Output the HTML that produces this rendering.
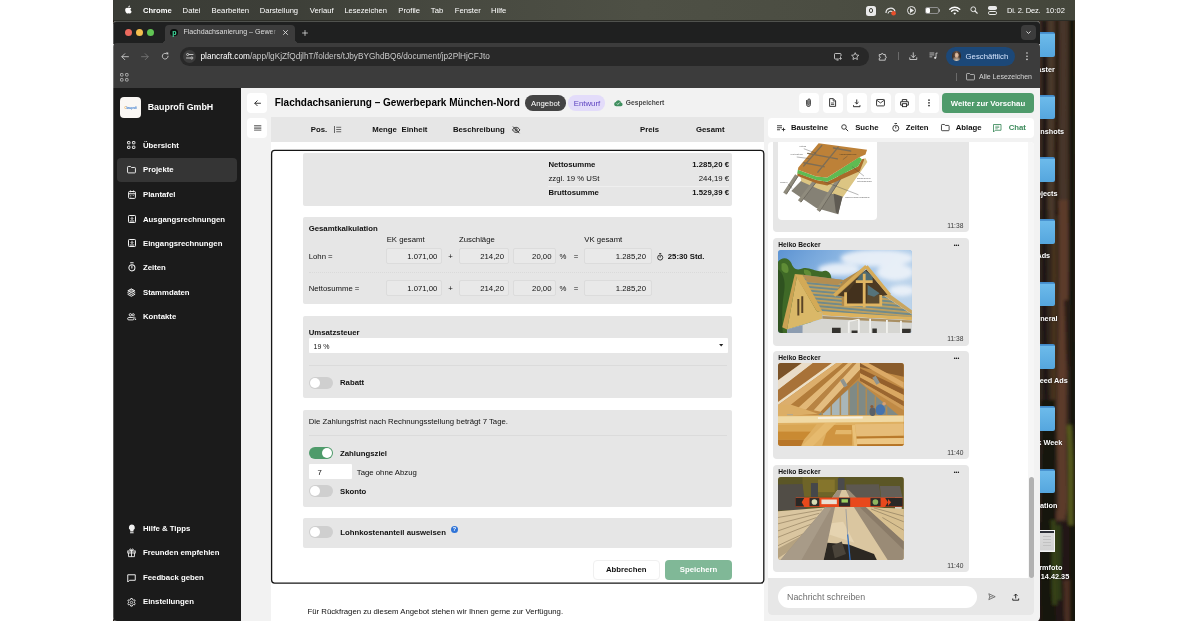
<!DOCTYPE html>
<html lang="de">
<head>
<meta charset="utf-8">
<title>Flachdachsanierung – Gewerbepark München-Nord</title>
<style>
*{box-sizing:border-box;margin:0;padding:0}
html,body{width:1188px;height:621px;overflow:hidden;background:#fff}
body{font-family:"Liberation Sans",sans-serif;color:#111;position:relative;font-size:7.78px;will-change:transform}
.a{position:absolute}
.t{position:absolute;white-space:nowrap;line-height:1;transform:translateY(-50%)}
.b{font-weight:700}
.r{transform:translate(-100%,-50%)}
.c{transform:translate(-50%,-50%)}
svg{position:absolute;overflow:visible}
.w{color:#fff}
.btn{position:absolute;background:#fff;border-radius:4px;width:20px;height:20px}
.sec{position:absolute;left:303px;width:429px;background:#e6e6e6;border-radius:2px}
.inp{position:absolute;background:#e9e9e9;border:1px solid #dcdcdc;border-radius:2px;height:16.4px}
.tog{position:absolute;left:309px;width:24px;height:12px;border-radius:6px;background:#cfcfcf}
.tog i{position:absolute;left:1px;top:1px;width:10px;height:10px;border-radius:5px;background:#fff}
.tog.on{background:#4f9b6b}.tog.on i{left:13px}
.hl{position:absolute;left:308.7px;width:418px;height:0;border-top:0.6px solid #dbdbdb}
.bub{position:absolute;left:773px;width:195.5px;background:#e6e6e6;border-radius:4px}
.sm{font-size:6.67px}
.fold{position:absolute;left:0;width:14.800px;height:24.800px;border-radius:0 2px 2px 0;background:linear-gradient(#3f88c6 0,#4a93d0 1.500px,#6cbaea 2.500px,#55a6de 100%)}
.dl{color:#fff;font-weight:700;font-size:7.3px;text-shadow:0 0 1.5px rgba(0,0,0,0.6)}
</style>
</head>
<body>
<div class="a" style="left:113px;top:0;width:962px;height:621px;background:#2a2019"></div>
<svg style="left:1036px;top:18px" width="39" height="603" viewBox="1036 18 39 603"><defs><filter id="bl" x="-20%" y="-5%" width="140%" height="110%"><feGaussianBlur stdDeviation="1.600"/></filter><clipPath id="dc"><rect x="1036" y="18" width="39" height="603"/></clipPath></defs>
<g clip-path="url(#dc)"><g filter="url(#bl)">
<rect x="1030" y="10" width="50" height="620" fill="#33261d"/>
<rect x="1030" y="10" width="50" height="200" fill="#3f2f24"/>
<path d="M1044,20C1046,120 1042,260 1046,400S1044,560 1046,625" stroke="#1f1712" stroke-width="5" fill="none"/>
<path d="M1057,20C1058,90 1055,150 1057,215" stroke="#21180f" stroke-width="3" fill="none"/>
<path d="M1051,20C1052,100 1050,160 1052,230" stroke="#4a382a" stroke-width="5" fill="none"/>
<path d="M1063,20C1064,100 1062,160 1064,230" stroke="#46352a" stroke-width="6" fill="none"/>
<path d="M1063,200C1066,300 1060,380 1062,460S1060,500 1061,520" stroke="#5b3a29" stroke-width="9" fill="none"/>
<rect x="1036" y="522" width="44" height="105" fill="#1c1611" opacity="0.800"/>
<path d="M1067,580C1069,595 1067,610 1069,625" stroke="#4a2e20" stroke-width="8" fill="none"/>
<path d="M1058,525C1060,550 1056,570 1059,600" stroke="#2f3a15" stroke-width="6" fill="none"/>
<path d="M1054,230C1056,300 1052,380 1054,420" stroke="#46301f" stroke-width="5" fill="none"/>
<path d="M1072,18C1073,200 1071,400 1073,625" stroke="#19140f" stroke-width="6" fill="none"/>
<path d="M1048,400C1050,470 1046,560 1049,625" stroke="#17130e" stroke-width="14" fill="none"/>
<path d="M1069,425C1072,460 1070,500 1071,525" stroke="#55591f" stroke-width="5" fill="none"/>
<path d="M1053,520C1056,550 1052,580 1055,605" stroke="#343f17" stroke-width="5" fill="none"/>
<path d="M1066,300C1068,330 1067,350 1069,370" stroke="#2a1c14" stroke-width="4" fill="none"/>
</g></g></svg>
<div class="a" style="left:113px;top:0;width:962px;height:20px;border-bottom:1px solid #2c2d27;box-sizing:content-box;background:linear-gradient(90deg,#3a3c36 0,#3d3f38 18%,#474940 35%,#4e5045 55%,#4b4d42 75%,#44463b 100%)"></div>
<span class="t b w" style="left:143px;top:10.5px;font-size:7.6px">Chrome</span>
<span class="t w" style="left:182.6px;top:10.5px;font-size:7.7px">Datei</span>
<span class="t w" style="left:211.600px;top:10.500px;font-size:7.750px">Bearbeiten</span>
<span class="t w" style="left:259.700px;top:10.500px;font-size:7.600px">Darstellung</span>
<span class="t w" style="left:309.800px;top:10.500px;font-size:7.700px">Verlauf</span>
<span class="t w" style="left:344.4px;top:10.5px;font-size:7.57px">Lesezeichen</span>
<span class="t w" style="left:398.3px;top:10.5px;font-size:7.7px">Profile</span>
<span class="t w" style="left:430.8px;top:10.5px;font-size:7.7px">Tab</span>
<span class="t w" style="left:454.700px;top:10.500px;font-size:7.700px">Fenster</span>
<span class="t w" style="left:491px;top:10.500px;font-size:7.700px">Hilfe</span>
<span class="t w" style="left:1006.900px;top:11px;font-size:7.500px;letter-spacing:-0.120px">Di. 2. Dez.</span>
<span class="t w" style="left:1045.700px;top:11px;font-size:7.500px;letter-spacing:0.120px">10:02</span>
<!-- apple -->
<svg style="left:124px;top:4.800px" width="8" height="9.200" viewBox="0 0 18 20"><path fill="#fff" d="M14.6 10.6c0-2.2 1.8-3.2 1.9-3.3-1-1.5-2.6-1.7-3.200-1.700-1.400-.1-2.700.8-3.300.8-.7 0-1.700-.8-2.900-.8C5.600 5.600 4.200 6.500 3.400 7.800c-1.600 2.700-.4 6.800 1.100 9 .8 1.100 1.700 2.300 2.900 2.200 1.100 0 1.600-.7 3-.7s1.800.7 3 .7c1.200 0 2-1.100 2.800-2.200.9-1.300 1.200-2.500 1.200-2.500s-2.400-.9-2.400-3.600zM12.300 4c.6-.8 1.100-1.900.9-3-.9 0-2 .6-2.700 1.400-.6.700-1.100 1.800-1 2.900 1.100.1 2.100-.5 2.800-1.300z"/></svg>
<!-- status icons -->
<div class="a" style="left:866px;top:5.5px;width:10px;height:10px;border-radius:2.5px;background:#e9e9e9"></div>
<div class="a" style="left:868.6px;top:8.1px;width:4.8px;height:4.8px;border-radius:50%;border:1px solid #3e4038"></div>
<svg style="left:885px;top:5.5px" width="12" height="10" viewBox="0 0 12 10"><path d="M1 7a4.600 4.600 0 0 1 9-1.500" stroke="#e9e9e9" stroke-width="1.200" fill="none"/><path d="M3 7.500a2.700 2.700 0 0 1 5-1" stroke="#e9e9e9" stroke-width="1.100" fill="none"/><circle cx="8.600" cy="7.300" r="2.300" fill="#e8502c"/></svg>
<div class="a" style="left:906.6px;top:6px;width:9px;height:9px;border-radius:50%;border:1px solid #e9e9e9"></div>
<svg style="left:909.8px;top:8.3px" width="4" height="5" viewBox="0 0 4 5"><path d="M0 0L4 2.500L0 5z" fill="#e9e9e9"/></svg>
<div class="a" style="left:925px;top:7px;width:13.500px;height:7px;border-radius:2px;border:0.8px solid #8f8f8f"></div>
<div class="a" style="left:926.3px;top:8.3px;width:3.500px;height:4.400px;border-radius:1px;background:#fff"></div>
<div class="a" style="left:939px;top:9.200px;width:1px;height:2.600px;border-radius:0 1px 1px 0;background:#aaa"></div>
<svg style="left:949px;top:5.800px" width="11.500" height="9" viewBox="0 0 23 18"><path d="M1.500 6.500a14.500 14.500 0 0 1 20 0M5 10.500a9.500 9.500 0 0 1 13 0" stroke="#fff" stroke-width="2.600" fill="none" stroke-linecap="round"/><path d="M8.500 14.200a4.500 4.500 0 0 1 6 0L11.500 17.500z" fill="#fff"/></svg>
<svg style="left:970px;top:6.300px" width="8" height="8" viewBox="0 0 16 16"><circle cx="6.500" cy="6.500" r="4.800" stroke="#e9e9e9" stroke-width="1.900" fill="none"/><path d="M10 10l4.500 4.500" stroke="#e9e9e9" stroke-width="2.200" stroke-linecap="round"/></svg>
<div class="a" style="left:988.3px;top:6.300px;width:8.500px;height:3.600px;border-radius:1.800px;background:#e9e9e9"></div>
<div class="a" style="left:988.3px;top:11px;width:8.500px;height:3.600px;border-radius:1.800px;border:0.9px solid #e9e9e9"></div>
<!-- desktop folders + labels -->
<div class="a" style="left:1040px;top:0;width:35px;height:621px;overflow:hidden">
<div class="fold" style="left:0;top:32.4px"></div>
<div class="fold" style="left:0;top:94.7px"></div>
<div class="fold" style="left:0;top:157.0px"></div>
<div class="fold" style="left:0;top:219.3px"></div>
<div class="fold" style="left:0;top:281.6px"></div>
<div class="fold" style="left:0;top:343.9px"></div>
<div class="fold" style="left:0;top:406.2px"></div>
<div class="fold" style="left:0;top:468.5px"></div>
<span class="t dl r" style="left:14.8px;top:69.5px">aster</span>
<span class="t dl r" style="left:24.2px;top:131.8px">enshots</span>
<span class="t dl r" style="left:17.6px;top:194.1px">ojects</span>
<span class="t dl r" style="left:10.2px;top:256.4px">Ads</span>
<span class="t dl r" style="left:17.6px;top:318.7px">eneral</span>
<span class="t dl r" style="left:27.8px;top:381.0px">Feed Ads</span>
<span class="t dl r" style="left:22.4px;top:443.3px">rk Week</span>
<span class="t dl r" style="left:17.4px;top:505.6px">cation</span>
<div class="a" style="left:0;top:530px;width:15px;height:22px;background:linear-gradient(#f4f4f4 0,#f4f4f4 1px,#2b2e36 1px,#2b2e36 3px,#dadada 3px,#d2d2d2 20px,#f4f4f4 21px);border-right:1px solid #f4f4f4"></div>
<div class="a" style="left:3px;top:536px;width:8px;height:12px;background:repeating-linear-gradient(#c2c2c2 0 0.700px,rgba(0,0,0,0) 0.700px 3px)"></div>
<span class="t dl r" style="left:22.400px;top:567.800px">irmfoto</span>
<span class="t dl r" style="left:29.200px;top:576.600px">14.42.35</span>
</div>

<div class="a" style="left:113px;top:21px;width:927px;height:600.500px;background:#f2f2f2;border-radius:3.500px 3.500px 5px 5px"></div>
<div class="a" style="left:113px;top:21px;width:927px;height:23px;background:#1f2020;border-radius:3.500px 3.500px 0 0;border-top:1px solid #50524e"></div>
<div class="a" style="left:113px;top:43.300px;width:927px;height:44.700px;background:#3c3c3c;border-radius:4px 4px 0 0"></div>
<!-- traffic lights -->
<div class="a" style="left:124.700px;top:29.100px;width:7px;height:7px;border-radius:50%;background:#ec6a5e"></div>
<div class="a" style="left:135.900px;top:29.100px;width:7px;height:7px;border-radius:50%;background:#f4bf4f"></div>
<div class="a" style="left:146.900px;top:29.100px;width:7px;height:7px;border-radius:50%;background:#61c554"></div>
<!-- tab -->
<div class="a" style="left:165.200px;top:24.700px;width:129.600px;height:19px;background:#3c3c3c;border-radius:4px 4px 0 0"></div>
<div class="a" style="left:161.200px;top:39.300px;width:4px;height:4px;background:radial-gradient(circle at 0 0,#1f2020 3.900px,#3c3c3c 4.100px)"></div>
<div class="a" style="left:294.800px;top:39.300px;width:4px;height:4px;background:radial-gradient(circle at 100% 0,#1f2020 3.900px,#3c3c3c 4.100px)"></div>
<div class="a" style="left:170.200px;top:28.800px;width:7.600px;height:7.600px;border-radius:50%;background:#0c0f0d"></div>
<span class="t b" style="left:172.300px;top:32.400px;font-size:7px;color:#3fe0a0">p</span>
<span class="t" style="left:183.400px;top:32.700px;font-size:7.090px;color:#dfdfdf">Flachdachsanierung – Gewer</span>
<div class="a" style="left:270px;top:27px;width:8px;height:11px;background:linear-gradient(90deg,rgba(60,60,60,0),#3c3c3c)"></div>
<svg style="left:283px;top:30.100px" width="5" height="5" viewBox="0 0 10 10"><path d="M1 1l8 8M9 1l-8 8" stroke="#e3e3e3" stroke-width="1.700" stroke-linecap="round"/></svg>
<svg style="left:302.400px;top:29.600px" width="6" height="6" viewBox="0 0 12 12"><path d="M6 1v10M1 6h10" stroke="#e3e3e3" stroke-width="1.500" stroke-linecap="round"/></svg>
<!-- chevron button -->
<div class="a" style="left:1021px;top:24.800px;width:15px;height:15px;border-radius:4px;background:#3c3c3c"></div>
<svg style="left:1026px;top:30.500px" width="5" height="3.500" viewBox="0 0 10 7"><path d="M1.500 1.500L5 5l3.500-3.500" stroke="#e3e3e3" stroke-width="1.800" fill="none" stroke-linecap="round" stroke-linejoin="round"/></svg>
<!-- nav -->
<svg style="left:121.300px;top:52.700px" width="8" height="7.400" viewBox="0 0 16 15"><path d="M15 7.500H2M7.500 1.500L1.500 7.500l6 6" stroke="#d6d6d6" stroke-width="1.700" fill="none" stroke-linecap="round" stroke-linejoin="round"/></svg>
<svg style="left:141.300px;top:52.700px" width="8" height="7.400" viewBox="0 0 16 15"><path d="M1 7.500h13M8.500 1.500l6 6-6 6" stroke="#7a7a7a" stroke-width="1.700" fill="none" stroke-linecap="round" stroke-linejoin="round"/></svg>
<svg style="left:161.400px;top:52.300px" width="8.400" height="8.400" viewBox="0 0 16 16"><path d="M13.500 8A5.500 5.500 0 1 1 11.600 3.800" stroke="#d6d6d6" stroke-width="1.600" fill="none" stroke-linecap="round"/><path d="M9.200 0.800l4.600 0 0 4.600z" fill="#d6d6d6"/></svg>
<!-- url pill -->
<div class="a" style="left:180px;top:47px;width:688.500px;height:18.500px;border-radius:9.250px;background:#282828"></div>
<div class="a" style="left:182.700px;top:49.800px;width:13px;height:13px;border-radius:50%;background:#3c3c3c"></div>
<svg style="left:185.500px;top:53px" width="7.500" height="6.500" viewBox="0 0 15 13"><path d="M6.500 3H14M1 10h7.500" stroke="#e3e3e3" stroke-width="1.600" stroke-linecap="round"/><circle cx="3.300" cy="3" r="2.100" stroke="#e3e3e3" stroke-width="1.500" fill="none"/><circle cx="11.600" cy="10" r="2.100" stroke="#e3e3e3" stroke-width="1.500" fill="none"/></svg>
<span class="t" style="left:200.500px;top:57px;font-size:8.240px;color:#fff">plancraft.com<span style="color:#c9c9c9">/app/lgKjZfQdjlhT/folders/tJbyBYGhdBQ6/document/jp2PlHjCFJto</span></span>
<!-- apps grid -->
<svg style="left:119.800px;top:72.800px" width="8.600" height="8.600" viewBox="0 0 17 17"><g stroke="#c7c7c7" stroke-width="1.500" fill="none"><rect x="1" y="1" width="5" height="5" rx="0.800"/><rect x="11" y="1" width="5" height="5" rx="0.800"/><rect x="1" y="11" width="5" height="5" rx="0.800"/><rect x="11" y="11" width="5" height="5" rx="0.800"/></g></svg>
<!-- right toolbar icons -->
<svg style="left:833.500px;top:52.500px" width="8.500" height="7.500" viewBox="0 0 17 15"><path d="M9.500 12H2.500a1.500 1.500 0 0 1-1.500-1.500V2.500A1.500 1.500 0 0 1 2.500 1h10A1.500 1.500 0 0 1 14 2.500V6" stroke="#e3e3e3" stroke-width="1.600" fill="none"/><path d="M5 14.200h4" stroke="#e3e3e3" stroke-width="1.500"/><path d="M13 7v5.500M10.500 10.300L13 12.800l2.500-2.500" stroke="#e3e3e3" stroke-width="1.500" fill="none"/></svg>
<svg style="left:851.200px;top:52.200px" width="8.400" height="8.200" viewBox="0 0 17 16.500"><path d="M8.500 1.300l2.200 4.700 5.100.600-3.800 3.500 1 5.100-4.500-2.600-4.500 2.600 1-5.100L1.200 6.600l5.100-.600z" stroke="#e3e3e3" stroke-width="1.500" fill="none" stroke-linejoin="round"/></svg>
<svg style="left:878.300px;top:51.600px" width="9.400" height="9.200" viewBox="0 0 19 18.500"><path d="M2.500 5h4a2.100 2.100 0 0 1 4.200 0h4v3.600a2.100 2.100 0 0 1 0 4.200v3.700h-12.200v-3.700a2.100 2.100 0 0 0 0-4.200z" stroke="#e3e3e3" stroke-width="1.600" fill="none" stroke-linejoin="round"/></svg>
<div class="a" style="left:898.200px;top:51.500px;width:0.700px;height:8.500px;background:#6a6a6a"></div>
<svg style="left:909px;top:52px" width="8.500" height="8.500" viewBox="0 0 17 17"><path d="M8.500 1.500v9M4.500 7l4 4 4-4M1.500 11.500v3.500h14v-3.500" stroke="#e3e3e3" stroke-width="1.600" fill="none" stroke-linecap="round" stroke-linejoin="round"/></svg>
<svg style="left:929px;top:52.300px" width="8.800" height="7.800" viewBox="0 0 17.500 15.500"><path d="M1 2h9.500M1 5.800h9.500M1 9.600h5.500" stroke="#e3e3e3" stroke-width="1.400"/><path d="M14 2v9M14 2.200h3.200" stroke="#e3e3e3" stroke-width="1.500"/><circle cx="12.300" cy="11.600" r="2.200" fill="#e3e3e3"/></svg>
<div class="a" style="left:945.800px;top:46.700px;width:69.500px;height:19px;border-radius:9.500px;background:#1c4878"></div>
<div class="a" style="left:951.600px;top:51.400px;width:9.600px;height:9.600px;border-radius:50%;background:radial-gradient(ellipse 2.300px 3px at 52% 42%,#e6c9b0 0,#c9a58a 70%,rgba(0,0,0,0) 100%),radial-gradient(circle at 50% 100%,#d8d2c8 0,#8a7a6c 30%,rgba(0,0,0,0) 45%),linear-gradient(90deg,#3a2c24,#6a5446 50%,#2c2420)"></div>
<span class="t" style="left:965.600px;top:57px;font-size:7.760px;color:#d3e3fd">Geschäftlich</span>
<svg style="left:1026.300px;top:52.200px" width="2" height="8.400" viewBox="0 0 4 17"><circle cx="2" cy="2" r="1.600" fill="#e3e3e3"/><circle cx="2" cy="8.500" r="1.600" fill="#e3e3e3"/><circle cx="2" cy="15" r="1.600" fill="#e3e3e3"/></svg>
<div class="a" style="left:956.200px;top:72.600px;width:0.700px;height:8.500px;background:#6a6a6a"></div>
<svg style="left:965.600px;top:73px" width="9" height="7.400" viewBox="0 0 18 15"><path d="M1 2.500A1.500 1.500 0 0 1 2.500 1H7l2 2h6.500A1.500 1.500 0 0 1 17 4.500v8a1.500 1.500 0 0 1-1.500 1.500h-13A1.500 1.500 0 0 1 1 12.500z" stroke="#d6d6d6" stroke-width="1.500" fill="none"/></svg>
<span class="t" style="left:979px;top:77px;font-size:7.010px;color:#d6d6d6">Alle Lesezeichen</span>

<div class="a" style="left:113px;top:88px;width:128px;height:533px;background:#1b1b1b;border-radius:0 0 0 4px"></div>
<div class="a" style="left:120px;top:96.500px;width:21px;height:21.500px;border-radius:4px;background:#faf7f4"></div>
<span class="t b" style="left:124.500px;top:107.500px;font-size:2.800px;color:#3f7fd0;letter-spacing:-0.100px"><span style="color:#e8a13a">C</span>bauprofi</span>
<span class="t b w" style="left:147.700px;top:107px;font-size:8.880px">Bauprofi GmbH</span>
<div class="a" style="left:116.600px;top:157.500px;width:120.400px;height:24.200px;border-radius:4px;background:#353535"></div>
<span class="t b w" style="left:143px;top:146px">Übersicht</span>
<span class="t b w" style="left:143px;top:170px">Projekte</span>
<span class="t b w" style="left:143px;top:195px">Plantafel</span>
<span class="t b w" style="left:143px;top:220px">Ausgangsrechnungen</span>
<span class="t b w" style="left:143px;top:244px">Eingangsrechnungen</span>
<span class="t b w" style="left:143px;top:268px">Zeiten</span>
<span class="t b w" style="left:143px;top:293px">Stammdaten</span>
<span class="t b w" style="left:143px;top:317px">Kontakte</span>
<span class="t b w" style="left:143px;top:529px">Hilfe &amp; Tipps</span>
<span class="t b w" style="left:143px;top:553px">Freunden empfehlen</span>
<span class="t b w" style="left:143px;top:578px">Feedback geben</span>
<span class="t b w" style="left:143px;top:602px">Einstellungen</span>
<!-- icons -->
<svg style="left:127.200px;top:141.300px" width="8.400" height="8" viewBox="0 0 17 16"><g stroke="#f4f4f4" stroke-width="1.900" fill="none"><rect x="1" y="1" width="5" height="4.600" rx="0.600"/><rect x="11" y="1" width="5" height="4.600" rx="0.600"/><rect x="1" y="10.400" width="5" height="4.600" rx="0.600"/><rect x="11" y="10.400" width="5" height="4.600" rx="0.600"/></g></svg>
<svg style="left:127px;top:166px" width="9" height="7.400" viewBox="0 0 18 15"><path d="M1 2.500A1.500 1.500 0 0 1 2.500 1H7l2 2h6.500A1.500 1.500 0 0 1 17 4.500v8a1.500 1.500 0 0 1-1.500 1.500h-13A1.500 1.500 0 0 1 1 12.500z" stroke="#f4f4f4" stroke-width="1.900" fill="none"/></svg>
<svg style="left:127.500px;top:189.800px" width="8" height="9" viewBox="0 0 16 18"><rect x="1.200" y="3" width="13.600" height="13.800" rx="1.800" stroke="#f4f4f4" stroke-width="2" fill="none"/><path d="M1.200 7.500h13.600M4.800 1v3.500M11.200 1v3.500" stroke="#f4f4f4" stroke-width="2"/><path d="M4.500 11h2M9.500 11h2M4.500 14h2" stroke="#f0f0f0" stroke-width="1.400"/></svg>
<svg style="left:127.500px;top:214.800px" width="8" height="8" viewBox="0 0 16 16"><rect x="1" y="1" width="14" height="14" rx="1.500" stroke="#f4f4f4" stroke-width="2" fill="none"/><path d="M8 3.500v5M5.500 6.500L8 9l2.500-2.500M3.500 12h9" stroke="#f4f4f4" stroke-width="1.800" fill="none"/></svg>
<svg style="left:127.500px;top:239.300px" width="8" height="8" viewBox="0 0 16 16"><rect x="1" y="1" width="14" height="14" rx="1.500" stroke="#f4f4f4" stroke-width="2" fill="none"/><path d="M8 3.500v5M5.500 6.500L8 9l2.500-2.500M3.500 12h9" stroke="#f4f4f4" stroke-width="1.800" fill="none"/></svg>
<svg style="left:127.500px;top:262.200px" width="7.800" height="9.800" viewBox="0 0 16 20"><circle cx="8" cy="12" r="6.200" stroke="#f4f4f4" stroke-width="2.100" fill="none"/><path d="M5.300 1.600h5.400M8 7.500v5" stroke="#f4f4f4" stroke-width="2.100" stroke-linecap="round"/></svg>
<svg style="left:127.100px;top:287.800px" width="8.700" height="8.900" viewBox="0 0 18 18.500"><path d="M9 1.800L16.300 5.800 9 9.800 1.700 5.800z" stroke="#f4f4f4" stroke-width="2" fill="#8a8a8a" stroke-linejoin="round"/><path d="M1.700 9.600l7.300 4 7.300-4M1.700 13.200l7.300 4 7.300-4" stroke="#f4f4f4" stroke-width="2" fill="none" stroke-linejoin="round" stroke-linecap="round"/></svg>
<svg style="left:126.800px;top:313px" width="9.600" height="7.600" viewBox="0 0 20 16"><circle cx="7" cy="3.800" r="2.500" stroke="#f4f4f4" stroke-width="1.900" fill="none"/><circle cx="13" cy="3.800" r="2.300" stroke="#f4f4f4" stroke-width="1.800" fill="none"/><rect x="1.200" y="9.500" width="13.600" height="5" rx="2.500" stroke="#f4f4f4" stroke-width="1.900" fill="none"/><circle cx="17.800" cy="13" r="1.500" fill="#f4f4f4"/><path d="M15 8.500c1.500.300 2.500 1 3 2" stroke="#f4f4f4" stroke-width="1.500" fill="none"/></svg>
<svg style="left:127.600px;top:523.800px" width="7.700" height="10.400" viewBox="0 0 14 19"><path d="M7 1a5.500 5.500 0 0 0-3 10.100V13.500h6v-2.400A5.500 5.500 0 0 0 7 1z" fill="#f0f0f0"/><path d="M4.500 16h5" stroke="#f4f4f4" stroke-width="2" stroke-linecap="round"/></svg>
<svg style="left:127px;top:548.300px" width="9" height="9.400" viewBox="0 0 18 19"><rect x="1.500" y="6" width="15" height="4" stroke="#f4f4f4" stroke-width="1.900" fill="none"/><path d="M3 10v7.500h12V10M9 6v11.500M9 5.500C7 5.500 5 4.500 5.500 2.500S9 3 9 5.500c0-2.500 3-5 3.500-3S11 5.500 9 5.500z" stroke="#f4f4f4" stroke-width="1.800" fill="none"/></svg>
<svg style="left:127px;top:573.600px" width="9" height="8.800" viewBox="0 0 18 17.500"><path d="M1.500 1.500h15v11h-11.500l-3.500 3.500z" stroke="#f4f4f4" stroke-width="1.900" fill="none" stroke-linejoin="round"/></svg>
<svg style="left:127px;top:597.600px" width="9" height="9" viewBox="0 0 18 18"><path d="M7.500 1h3l.5 2.200 1.800 1 2.100-.7 1.500 2.600-1.600 1.500v2l1.600 1.500-1.500 2.600-2.100-.7-1.800 1-.5 2.200h-3l-.5-2.200-1.800-1-2.100.7-1.500-2.600 1.600-1.500v-2L1.600 6.100l1.500-2.600 2.100.7 1.800-1z" stroke="#f4f4f4" stroke-width="1.800" fill="none" stroke-linejoin="round"/><circle cx="9" cy="9" r="2.400" stroke="#f0f0f0" stroke-width="1.500" fill="none"/></svg>
<div class="a" style="left:113px;top:24px;width:1px;height:595px;background:rgba(255,255,255,0.280)"></div>

<div class="btn" style="left:247px;top:92.800px"></div>
<div class="btn" style="left:247px;top:118px"></div>
<svg style="left:253.800px;top:99.600px" width="7" height="6.500" viewBox="0 0 14 13"><path d="M13 6.500H2M6.500 1.500L1.500 6.500l5 5" stroke="#222" stroke-width="1.800" fill="none" stroke-linecap="round" stroke-linejoin="round"/></svg>
<svg style="left:253.600px;top:125px" width="7.400" height="5.800" viewBox="0 0 15 12"><path d="M0 1.200h15M0 4.400h15M0 7.600h15M0 10.800h15" stroke="#555" stroke-width="1.700"/></svg>
<span class="t b" style="left:274.700px;top:103px;font-size:10px;color:#000">Flachdachsanierung – Gewerbepark München-Nord</span>
<div class="a" style="left:525.300px;top:95px;width:40.600px;height:15.600px;border-radius:7.800px;background:#444"></div>
<span class="t w" style="left:531px;top:103.500px;font-size:7.780px">Angebot</span>
<div class="a" style="left:568.200px;top:95px;width:37.100px;height:15.600px;border-radius:7.800px;background:#e3dcfa"></div>
<span class="t" style="left:573.800px;top:103.500px;font-size:7.780px;color:#5a3fbf">Entwurf</span>
<svg style="left:614px;top:99.600px" width="8.800" height="6.200" viewBox="0 0 18 12.500"><path d="M14.500 5A5.700 5.700 0 0 0 3.700 3.800 4.400 4.400 0 0 0 4.500 12.500h9.700a3.800 3.800 0 0 0 .3-7.500z" fill="#3f8f5f"/><path d="M5.800 7l2 2 4-4" stroke="#fff" stroke-width="1.500" fill="none"/></svg>
<span class="t b sm" style="left:625.800px;top:103px;color:#484848">Gespeichert</span>
<!-- right buttons -->
<div class="btn" style="left:799px;top:93px"></div>
<div class="btn" style="left:823px;top:93px"></div>
<div class="btn" style="left:847px;top:93px"></div>
<div class="btn" style="left:870.800px;top:93px"></div>
<div class="btn" style="left:894.700px;top:93px"></div>
<div class="btn" style="left:918.600px;top:93px"></div>
<div class="a" style="left:941.800px;top:93px;width:92.200px;height:20px;border-radius:4px;background:#4f9b6b"></div>
<span class="t b w c" style="left:988px;top:103.500px">Weiter zur Vorschau</span>
<!-- band -->
<div class="a" style="left:271px;top:117px;width:493px;height:25px;background:#e6e6e6"></div>
<span class="t b" style="left:310.800px;top:130px">Pos.</span>
<svg style="left:334.300px;top:126px" width="7.200" height="7" viewBox="0 0 14.500 14"><path d="M1 0v14" stroke="#333" stroke-width="1.500"/><path d="M4.500 2.500h10M4.500 7h10M4.500 11.500h10" stroke="#333" stroke-width="1.400"/></svg>
<span class="t b" style="left:372.300px;top:130px">Menge</span>
<span class="t b" style="left:401.500px;top:130px">Einheit</span>
<span class="t b" style="left:452.900px;top:130px">Beschreibung</span>
<svg style="left:512px;top:125.800px" width="8.400" height="7.800" viewBox="0 0 16.500 15"><path d="M1 7.500c2-3.500 4.500-5 7.200-5s5.200 1.500 7.200 5c-2 3.500-4.500 5-7.200 5s-5.200-1.500-7.200-5z" stroke="#222" stroke-width="1.700" fill="none"/><circle cx="8.200" cy="7.500" r="2.200" stroke="#222" stroke-width="1.500" fill="none"/><path d="M2 1l12.500 13" stroke="#222" stroke-width="1.800"/></svg>
<span class="t b" style="left:640px;top:130px">Preis</span>
<span class="t b" style="left:696px;top:130px">Gesamt</span>
<!-- header icons -->
<svg style="left:805.500px;top:98.300px" width="5" height="9.400" viewBox="0 0 10 19"><path d="M1.300 5v8.500a3.700 3.700 0 0 0 7.400 0V4.500a2.500 2.500 0 0 0-5 0v8.500a1.200 1.200 0 0 0 2.500 0V5" stroke="#222" stroke-width="1.900" fill="none" stroke-linecap="round"/></svg>
<svg style="left:828.600px;top:98.300px" width="7.200" height="9" viewBox="0 0 14.500 18"><path d="M1.200 1.200h7.500l4.600 4.600v11H1.200z" stroke="#222" stroke-width="1.800" fill="none" stroke-linejoin="round"/><path d="M8.500 1.500v4.500h4.500M4 10h6.500M4 13h6.500" stroke="#222" stroke-width="1.500" fill="none"/></svg>
<svg style="left:853.300px;top:98.800px" width="7.500" height="8.200" viewBox="0 0 15 16.500"><path d="M7.500 1v8.500M4 6.500l3.500 3.500L11 6.500M1 12.500v3h13v-3" stroke="#222" stroke-width="1.900" fill="none"/></svg>
<svg style="left:876.400px;top:99.300px" width="9" height="7.400" viewBox="0 0 18 15"><rect x="1" y="1" width="16" height="13" rx="1.500" stroke="#222" stroke-width="1.800" fill="none"/><path d="M1.500 2.500L9 8l7.500-5.500" stroke="#222" stroke-width="1.700" fill="none"/></svg>
<svg style="left:900.200px;top:98.800px" width="9" height="8.400" viewBox="0 0 18 17"><path d="M4.500 5V1.200h9V5M4.500 12.500H1.200V5.500h15.600v7H13.500" stroke="#222" stroke-width="1.900" fill="none" stroke-linejoin="round"/><rect x="4.800" y="9.500" width="8.400" height="6" stroke="#222" stroke-width="1.800" fill="none"/></svg>
<svg style="left:927.600px;top:99.200px" width="2" height="7.600" viewBox="0 0 4 15"><circle cx="2" cy="2" r="1.700" fill="#222"/><circle cx="2" cy="7.500" r="1.700" fill="#222"/><circle cx="2" cy="13" r="1.700" fill="#222"/></svg>

<div class="a" style="left:271px;top:141.800px;width:493px;height:479.200px;background:#fff"></div>
<svg style="left:0;top:0" width="1188" height="621"><rect x="271.600" y="150.400" width="492.200" height="432.700" rx="3" fill="#fff" stroke="#161616" stroke-width="1.300"/></svg>
<!-- sec1 totals -->
<div class="sec" style="top:153px;height:53px"></div>
<span class="t b" style="left:548.400px;top:165px">Nettosumme</span>
<span class="t b r" style="left:729px;top:165px">1.285,20 €</span>
<span class="t" style="left:548.400px;top:179px">zzgl. 19 % USt</span>
<span class="t r" style="left:729px;top:179px">244,19 €</span>
<div class="a" style="left:548px;top:185.600px;width:181px;height:0;border-top:0.600px solid #efefef"></div>
<span class="t b" style="left:548.400px;top:193px">Bruttosumme</span>
<span class="t b r" style="left:729px;top:193px">1.529,39 €</span>
<!-- sec2 kalkulation -->
<div class="sec" style="top:217px;height:87px"></div>
<span class="t b" style="left:308.700px;top:229px">Gesamtkalkulation</span>
<span class="t" style="left:386.700px;top:240px">EK gesamt</span>
<span class="t" style="left:459px;top:240px">Zuschläge</span>
<span class="t" style="left:584.300px;top:240px">VK gesamt</span>
<span class="t" style="left:308.700px;top:257px">Lohn =</span>
<div class="inp" style="left:386.400px;top:248px;width:55.900px"></div><span class="t r" style="left:437.400px;top:257px">1.071,00</span>
<span class="t" style="left:448.200px;top:257px">+</span>
<div class="inp" style="left:459px;top:248px;width:49.700px"></div><span class="t r" style="left:504px;top:257px">214,20</span>
<div class="inp" style="left:512.500px;top:248px;width:43.700px"></div><span class="t r" style="left:551.500px;top:257px">20,00</span>
<span class="t" style="left:559.400px;top:257px">%</span>
<span class="t" style="left:573.700px;top:257px">=</span>
<div class="inp" style="left:584.300px;top:248px;width:67.300px"></div><span class="t r" style="left:646px;top:257px">1.285,20</span>
<svg style="left:657.200px;top:252.500px" width="6.400" height="7.800" viewBox="0 0 12 15"><circle cx="6" cy="8.700" r="4.900" stroke="#222" stroke-width="1.700" fill="none"/><path d="M4 1.100h4M6 5.500v3.500" stroke="#222" stroke-width="1.700"/></svg>
<span class="t b" style="left:667.800px;top:257px">25:30 Std.</span>
<div class="a" style="left:308.700px;top:272.300px;width:418px;height:0;border-top:0.600px dotted #dadada"></div>
<span class="t" style="left:308.700px;top:289px">Nettosumme =</span>
<div class="inp" style="left:386.400px;top:280px;width:55.900px"></div><span class="t r" style="left:437.400px;top:289px">1.071,00</span>
<span class="t" style="left:448.200px;top:289px">+</span>
<div class="inp" style="left:459px;top:280px;width:49.700px"></div><span class="t r" style="left:504px;top:289px">214,20</span>
<div class="inp" style="left:512.500px;top:280px;width:43.700px"></div><span class="t r" style="left:551.500px;top:289px">20,00</span>
<span class="t" style="left:559.400px;top:289px">%</span>
<span class="t" style="left:573.700px;top:289px">=</span>
<div class="inp" style="left:584.300px;top:280px;width:67.300px"></div><span class="t r" style="left:646px;top:289px">1.285,20</span>
<!-- sec3 ust -->
<div class="sec" style="top:316px;height:82px"></div>
<span class="t b" style="left:308.700px;top:333px">Umsatzsteuer</span>
<div class="a" style="left:309.300px;top:338px;width:418.700px;height:15px;background:#fff;border-radius:1px"></div>
<span class="t sm" style="left:313.600px;top:346px;font-size:7px">19 %</span>
<svg style="left:718.800px;top:344px" width="4.400" height="2.600" viewBox="0 0 8 5"><path d="M0 0h8L4 5z" fill="#222"/></svg>
<div class="hl" style="top:364.600px"></div>
<div class="tog" style="top:376.500px"><i></i></div>
<span class="t b" style="left:340px;top:383px">Rabatt</span>
<!-- sec4 zahlung -->
<div class="sec" style="top:410px;height:97px"></div>
<span class="t" style="left:308.700px;top:422px">Die Zahlungsfrist nach Rechnungsstellung beträgt 7 Tage.</span>
<div class="hl" style="top:435px"></div>
<div class="tog on" style="top:447px"><i></i></div>
<span class="t b" style="left:340px;top:454px">Zahlungsziel</span>
<div class="a" style="left:309.300px;top:464px;width:42.600px;height:15px;background:#fff;border-radius:1px"></div>
<span class="t" style="left:317.400px;top:473px">7</span>
<span class="t" style="left:356.800px;top:473px">Tage ohne Abzug</span>
<div class="tog" style="top:485px"><i></i></div>
<span class="t b" style="left:340px;top:492px">Skonto</span>
<!-- sec5 lohn -->
<div class="sec" style="top:518px;height:30px"></div>
<div class="tog" style="top:526px"><i></i></div>
<span class="t b" style="left:340.200px;top:533px">Lohnkostenanteil ausweisen</span>
<div class="a" style="left:451px;top:526.200px;width:7px;height:7px;border-radius:50%;background:#2f74d8"></div>
<span class="t b w c" style="left:454.500px;top:529.900px;font-size:5.500px">?</span>
<!-- buttons -->
<div class="a" style="left:592.700px;top:559.500px;width:67px;height:20.800px;border-radius:4px;background:#fff;border:0.600px solid #f0f0f0"></div>
<span class="t b c" style="left:626.200px;top:570px">Abbrechen</span>
<div class="a" style="left:665px;top:560px;width:67px;height:19.800px;border-radius:4px;background:#80b897"></div>
<span class="t b w c" style="left:698.500px;top:570px">Speichern</span>
<span class="t" style="left:307.500px;top:612px">Für Rückfragen zu diesem Angebot stehen wir Ihnen gerne zur Verfügung.</span>

<!-- tabs -->
<div class="a" style="left:767.600px;top:117.800px;width:266.400px;height:19.800px;border-radius:4px;background:#fff"></div>
<span class="t b" style="left:791px;top:128px">Bausteine</span>
<span class="t b" style="left:855.200px;top:128px">Suche</span>
<span class="t b" style="left:905.700px;top:128px">Zeiten</span>
<span class="t b" style="left:955.700px;top:128px">Ablage</span>
<span class="t b" style="left:1008.700px;top:128px;color:#3d8b5c">Chat</span>
<svg style="left:776.500px;top:124.500px" width="8.500" height="6.500" viewBox="0 0 17 13"><path d="M0 1.500h10M0 5.500h10M0 9.500h6" stroke="#222" stroke-width="1.700"/><path d="M13 5.500v7M9.500 9h7" stroke="#222" stroke-width="1.700"/></svg>
<svg style="left:841px;top:124px" width="7.600" height="7.600" viewBox="0 0 16 16"><circle cx="6.300" cy="6.300" r="4.800" stroke="#222" stroke-width="1.800" fill="none"/><path d="M10 10l5 5" stroke="#222" stroke-width="2"/></svg>
<svg style="left:891.500px;top:123px" width="7.500" height="9" viewBox="0 0 15 18"><circle cx="7.500" cy="10.500" r="6" stroke="#222" stroke-width="1.700" fill="none"/><path d="M5 1h5M7.500 6.500v4.500" stroke="#222" stroke-width="1.700"/></svg>
<svg style="left:940.600px;top:124.300px" width="8.600" height="7.200" viewBox="0 0 18 15"><path d="M1 2.500A1.500 1.500 0 0 1 2.500 1H7l2 2h6.500A1.500 1.500 0 0 1 17 4.500v8a1.500 1.500 0 0 1-1.500 1.500h-13A1.500 1.500 0 0 1 1 12.500z" stroke="#222" stroke-width="1.700" fill="none"/></svg>
<svg style="left:993.300px;top:123.800px" width="8.500" height="8.500" viewBox="0 0 17 17"><path d="M1 1h15v11.500H4.500L1 16z" stroke="#3d8b5c" stroke-width="1.700" fill="none" stroke-linejoin="round"/><path d="M4.500 4.500h8M4.500 7h8M4.500 9.500h5" stroke="#3d8b5c" stroke-width="1.200"/></svg>
<!-- panel -->
<div class="a" style="left:767.600px;top:141.500px;width:266.400px;height:473.200px;border-radius:4px;background:#fff;overflow:hidden">
  <div class="a" style="left:260.600px;top:0;width:5.800px;height:437px;background:#f6f6f6"></div>
  <div class="a" style="left:261.200px;top:335.500px;width:5px;height:100.700px;border-radius:2.500px;background:#b2b2b2"></div>
  <div class="a" style="left:0;top:436.900px;width:266.400px;height:37px;background:#e7e7e7"></div>
  <div class="a" style="left:10.400px;top:444px;width:198.600px;height:22.100px;border-radius:11px;background:#fff"></div>
</div>
<span class="t" style="left:787px;top:597px;font-size:8.860px;color:#6f6f6f">Nachricht schreiben</span>
<svg style="left:987.500px;top:593px" width="8" height="7.400" viewBox="0 0 16 15"><path d="M1.500 1.500L14.500 7.500 1.500 13.500 3.500 7.500z" stroke="#555" stroke-width="1.500" fill="none" stroke-linejoin="round"/><path d="M3.500 7.500h6" stroke="#555" stroke-width="1.300"/></svg>
<svg style="left:1011.600px;top:592.500px" width="7.400" height="8" viewBox="0 0 15 16"><path d="M7.500 11V2M4 5.500L7.500 2 11 5.500" stroke="#222" stroke-width="1.900" fill="none"/><path d="M1.500 11v3.500h12V11" stroke="#222" stroke-width="1.900" fill="none"/></svg>
<!-- bubbles -->
<div class="bub" style="top:141.500px;height:90.200px;border-radius:0 0 4px 4px"></div>
<div class="bub" style="top:238.200px;height:107.400px"></div>
<div class="bub" style="top:351.400px;height:107.700px"></div>
<div class="bub" style="top:465.200px;height:107.300px"></div>
<span class="t b sm" style="left:778.300px;top:244.500px">Heiko Becker</span>
<span class="t b sm" style="left:778.300px;top:358px">Heiko Becker</span>
<span class="t b sm" style="left:778.300px;top:471.500px">Heiko Becker</span>
<span class="t b" style="left:953.700px;top:244.5px;font-size:5px;letter-spacing:0.100px">•••</span>
<span class="t b" style="left:953.700px;top:358.0px;font-size:5px;letter-spacing:0.100px">•••</span>
<span class="t b" style="left:953.700px;top:471.5px;font-size:5px;letter-spacing:0.100px">•••</span>
<span class="t sm" style="left:947.200px;top:226px;font-size:6.670px;color:#3a3a3a">11:38</span>
<span class="t sm" style="left:947.200px;top:339px;font-size:6.670px;color:#3a3a3a">11:38</span>
<span class="t sm" style="left:947.200px;top:452.500px;font-size:6.670px;color:#3a3a3a">11:40</span>
<span class="t sm" style="left:947.200px;top:566px;font-size:6.670px;color:#3a3a3a">11:40</span>
<!-- image 1: roof diagram -->
<div class="a" style="left:778.300px;top:141.500px;width:98.600px;height:78.100px;background:#fff;border-radius:0 0 4px 4px;overflow:hidden">
<svg style="left:0;top:0;filter:blur(0.300px)" width="98.600" height="78.100" viewBox="85 22 631 500">
<polygon points="170,335 235,268 495,378 470,485 330,445" fill="#858175"/>
<polygon points="225,230 400,295 590,205 645,125 657,150 500,375 440,356 340,322 235,275" fill="#dcc583"/>
<polygon points="440,352 500,372 495,385 470,485 455,470" fill="#5f5b53"/>
<path d="M205,235L128,352M325,268L222,402M512,200L342,462" stroke="#8f8b7d" stroke-width="24"/>
<path d="M214,240L138,357M334,273L232,407M521,205L352,467" stroke="#6d695e" stroke-width="6"/>
<polygon points="400,277 598,178 622,132 640,128 608,210 400,300 330,286 208,238 210,220 330,266" fill="#a96b2a"/>
<polygon points="212,200 330,243 400,250 605,118 622,132 598,178 400,277 330,266 208,222" fill="#5fbb52"/>
<polygon points="345,30 655,72 645,102 605,120 400,250 330,243 212,200 215,185" fill="#bd8138"/>
<path d="M250,175L365,45M340,215L470,55M275,95L465,130M250,155L380,180M440,60L550,80" stroke="#7d6d55" stroke-width="9" stroke-linecap="round"/>
<path d="M250,65L330,95M205,118L285,128M150,290L175,320M635,240L560,180M600,360L380,275M530,112L500,135" stroke="#444" stroke-width="2.500"/>
<text x="222" y="55" font-size="13" fill="#555" font-family="Liberation Sans, sans-serif">Lattung</text>
<text x="165" y="108" font-size="13" fill="#555" font-family="Liberation Sans, sans-serif">Konterlattung</text>
<text x="100" y="283" font-size="13" fill="#555" font-family="Liberation Sans, sans-serif">Sparren</text>
<text x="590" y="258" font-size="13" fill="#555" font-family="Liberation Sans, sans-serif">diffusionsoffene</text>
<text x="590" y="275" font-size="13" fill="#555" font-family="Liberation Sans, sans-serif">Unterspannbahn</text>
<text x="515" y="378" font-size="13" fill="#555" font-family="Liberation Sans, sans-serif">Zwischensparrendämmung</text>
<text x="475" y="107" font-size="12" fill="#4a3a22" font-family="Liberation Sans, sans-serif">Aufsparrendämmung</text>
</svg></div>
<!-- image 2: house roof construction -->
<div class="a" style="left:778.100px;top:249.500px;width:133.900px;height:83.400px;border-radius:3px;overflow:hidden;background:#8db7e3">
<svg style="left:0;top:0;filter:blur(0.400px)" width="133.900" height="83.400" viewBox="15 12 955 593" preserveAspectRatio="none">
<defs><linearGradient id="sky" x1="0" y1="0" x2="1" y2="0.500"><stop offset="0" stop-color="#5c93d2"/><stop offset="0.400" stop-color="#8ab5e2"/><stop offset="0.800" stop-color="#b4cfea"/><stop offset="1" stop-color="#bcd3ea"/></linearGradient>
<pattern id="bat" width="10" height="26" patternUnits="userSpaceOnUse" patternTransform="rotate(5)"><rect width="10" height="26" fill="#6f8a8c"/><rect width="10" height="12" fill="#c2a05c"/></pattern>
<filter id="cb"><feGaussianBlur stdDeviation="14"/></filter></defs>
<rect x="15" y="12" width="955" height="593" fill="url(#sky)"/>
<g fill="#eef3f9" filter="url(#cb)" opacity="0.900"><ellipse cx="450" cy="150" rx="150" ry="45"/><ellipse cx="720" cy="70" rx="260" ry="60"/><ellipse cx="850" cy="170" rx="130" ry="60"/><ellipse cx="900" cy="300" rx="90" ry="40"/></g>
<path d="M15,95C40,60 90,60 110,105C125,150 150,160 200,140C240,135 270,160 330,165C360,150 390,170 395,205L395,330 200,605 15,605z" fill="#3f6927"/>
<path d="M15,150C50,170 70,230 60,300S40,420 50,605L15,605z" fill="#2f5220"/>
<path d="M40,110C70,90 95,130 90,160S50,170 40,150zM200,150C240,150 260,175 250,195S200,185 200,170z" fill="#5f8c36"/>
<polygon points="190,188 482,226 560,200 640,300 760,330 970,470 970,500 300,450" fill="url(#bat)"/>
<polygon points="190,188 482,226 440,262 225,238" fill="#b38e52"/>
<polygon points="760,328 970,468 970,440 815,328" fill="#c9a55e"/>
<polygon points="135,183 150,200 80,578 45,562" fill="#caa253"/>
<polygon points="150,200 290,446 332,462 332,500 80,578" fill="#dab868"/>
<polygon points="135,183 190,188 332,450 290,446" fill="#d3aa57"/>
<path d="M160,360v118M188,340v120" stroke="#5a4426" stroke-width="14"/>
<polygon points="645,128 482,226 415,335 470,345 470,410 500,410" fill="#b08a4c"/>
<polygon points="645,150 440,335 500,345 500,410 750,410 750,340 800,330" fill="#4d3a22"/>
<polygon points="560,250 615,250 615,390 510,390 510,320" fill="#43311d"/><polygon points="650,255 745,330 745,395 650,395" fill="#5a4a30"/>
<polygon points="600,190 640,160 690,200 690,235 570,235" fill="#4f6a70"/><polygon points="655,260 740,320 700,345 655,330" fill="#55737a"/>
<path d="M645,128L415,335M645,128L812,332" stroke="#d6ab58" stroke-width="24"/>
<path d="M630,180v240M497,312v100M748,332v80M500,402h250M570,237h120" stroke="#e0b562" stroke-width="20"/>
<polygon points="300,445 970,488 970,512 332,478 332,462" fill="#dcb25e"/>
<polygon points="80,578 332,500 332,478 970,512 970,605 80,605" fill="#d6d6d2"/>
<polygon points="80,578 190,545 190,605 80,605" fill="#8c9cb0"/>
<polygon points="332,482 970,514 970,530 332,500" fill="#a98f62"/>
<path d="M592,505v100M672,500v105M792,510v95M892,515v90M520,520v85" stroke="#f1f1ee" stroke-width="13"/>
<path d="M520,520L592,505" stroke="#f1f1ee" stroke-width="9"/>
<path d="M400,565h62v40h-62zM540,585h42v20h-42zM688,570h32v32h-32zM900,572h62v33h-62z" fill="#34322e"/>
</svg></div>
<!-- image 3: attic interior -->
<div class="a" style="left:778.100px;top:363px;width:125.700px;height:83.100px;border-radius:3px;overflow:hidden;background:#c8923f">
<svg style="left:0;top:0;filter:blur(0.400px)" width="125.700" height="83.100" viewBox="15 12 897 593" preserveAspectRatio="none">
<rect x="15" y="12" width="897" height="593" fill="#c08a45"/>
<polygon points="585,140 300,385 875,385" fill="#7f8a86"/>
<polygon points="330,360 520,200 520,385 330,385" fill="#a9b6b8"/>
<path d="M330,340v45M395,290v95M460,235v150M522,185v200M585,150v235M645,195v190M710,250v135M790,320v65" stroke="#b08a52" stroke-width="11"/>
<polygon points="15,12 185,12 15,135" fill="#7a5228"/>
<polygon points="185,12 265,12 15,205 15,135" fill="#e9dcc8"/>
<polygon points="265,12 400,12 15,290 15,205" fill="#a87238"/>
<polygon points="400,12 432,12 15,312 15,290" fill="#ecdfc6"/>
<polygon points="432,12 480,12 70,340 15,340 15,312" fill="#dcae6c"/>
<polygon points="480,12 515,12 150,340 70,340" fill="#b27c3a"/>
<polygon points="515,12 550,12 215,345 150,340" fill="#e2b878"/>
<polygon points="550,12 575,12 270,350 215,345" fill="#b88444"/>
<polygon points="575,12 600,12 600,60 320,360 270,350" fill="#e4bd80"/>
<polygon points="600,60 600,110 340,370 320,360" fill="#b07a3a"/>
<polygon points="600,12 912,12 912,110 600,40" fill="#8a5c2c"/>
<polygon points="600,12 660,12 912,150 912,190" fill="#dcaa66"/>
<polygon points="600,50 912,200 912,240 600,85" fill="#94602c"/>
<polygon points="600,85 912,240 912,285 600,115" fill="#d9a862"/>
<polygon points="600,115 912,285 912,320 600,140" fill="#9a6630"/>
<polygon points="600,140 912,320 912,350 640,180" fill="#cf9c58"/>
<path d="M470,130L500,180M700,110L730,160" stroke="#8f9490" stroke-width="28"/>
<polygon points="15,310 110,310 300,375 15,395" fill="#dcae66"/>
<rect x="80" y="378" width="42" height="36" fill="#a9a79c"/>
<rect x="15" y="385" width="897" height="220" fill="#dfb062"/>
<polygon points="15,392 912,388 912,432 15,440" fill="#f0d9a4"/>
<polygon points="300,398 620,394 620,408 300,412" fill="#f7efe0"/>
<polygon points="15,455 290,450 250,500 15,500" fill="#d9a653"/><polygon points="15,500 250,500 200,560 15,560" fill="#c98a32"/>
<polygon points="15,560 200,560 180,605 15,605" fill="#b87628"/>
<polygon points="380,455 545,455 545,600 330,600" fill="#cf9440"/>
<polygon points="430,490 540,490 540,520 420,520" fill="#e3b66a"/>
<polygon points="350,440 430,440 265,605 185,605" fill="#e6ba6e"/>
<path d="M553,455L570,605" stroke="#e9c078" stroke-width="22"/>
<polygon points="565,450 912,445 912,530 575,535" fill="#e6bc78"/>
<polygon points="575,537 912,532 912,548 577,552" fill="#b97a2c"/>
<polygon points="577,552 912,548 912,590 580,592" fill="#ecc684"/>
<polygon points="580,592 912,590 912,605 580,605" fill="#b57426"/>
<ellipse cx="745" cy="345" rx="34" ry="38" fill="#4673ad"/><ellipse cx="690" cy="360" rx="22" ry="30" fill="#5a6068"/><circle cx="772" cy="303" r="13" fill="#d9a070"/><circle cx="685" cy="322" r="11" fill="#8a5a3a"/>
</svg></div>
<!-- image 4: ridge with level -->
<div class="a" style="left:778.100px;top:476.500px;width:125.700px;height:83.400px;border-radius:3px;overflow:hidden;background:#b7a07c">
<svg style="left:0;top:0;filter:blur(0.400px)" width="125.700" height="83.400" viewBox="15 12 897 593" preserveAspectRatio="none">
<rect x="15" y="12" width="897" height="260" fill="#5b5626"/>
<path d="M190,12h260v140h-260z" fill="#6e6428"/><path d="M300,30h120v90h-120z" fill="#85752c"/>
<polygon points="15,65 190,62 215,245 15,250" fill="#514d46"/>
<polygon points="500,66 735,64 750,165 510,165" fill="#5d5850"/><polygon points="742,76 885,76 905,165 752,165" fill="#645f57"/>
<rect x="850" y="160" width="48" height="95" fill="#cfd0c8"/>
<rect x="250" y="55" width="50" height="100" fill="#45474a"/><rect x="442" y="20" width="48" height="85" fill="#4a4a4c"/>
<polygon points="15,255 350,228 440,105 500,105 640,225 912,240 912,605 15,605" fill="#dac6a0"/>
<path d="M15,300L330,245M15,345L310,270M15,395L290,300M15,440L270,340M15,500L230,400" stroke="#a99674" stroke-width="7"/>
<polygon points="15,520 240,400 200,470 15,590" fill="#b5a280"/>
<polygon points="640,225 912,240 912,470" fill="#d8c090"/>
<path d="M680,240L912,330M700,232L912,290M760,300L912,390" stroke="#9a8866" stroke-width="6"/>
<polygon points="390,340 480,330 560,480 380,420" fill="#e5d3b0"/>
<polygon points="350,230 440,105 470,105 420,235 340,605 30,605" fill="#9d8f7c"/>
<polygon points="350,230 395,232 180,605 30,605" fill="#a89b88"/>
<polygon points="560,230 500,105 520,105 640,225 912,470 912,605 800,605" fill="#9a8b76"/>
<polygon points="600,228 640,225 912,470 912,530" fill="#8a7b68"/>
<polygon points="340,605 368,480 520,492 700,560 722,605" fill="#2c2822"/>
<polygon points="400,500 470,470 500,560 420,590" fill="#4a443a"/>
<path d="M500,240L512,420" stroke="#6f7f9a" stroke-width="4"/><path d="M512,420L530,605" stroke="#2f6fc2" stroke-width="9"/>
<rect x="140" y="158" width="765" height="67" rx="6" fill="#e8491c"/>
<path d="M140,162h62l-18,30 18,30h-62z" fill="#2a2826"/><path d="M905,162h-125l20,30 -20,30h125z" fill="#2a2826"/>
<path d="M800,168l22,24 -22,24z" fill="#e8491c"/>
<rect x="240" y="162" width="70" height="58" fill="#2e2c2a"/><circle cx="275" cy="190" r="20" fill="#d6dcb4"/>
<rect x="450" y="160" width="80" height="62" fill="#2e2c2a"/><rect x="468" y="170" width="46" height="24" fill="#9ad060"/>
<rect x="675" y="162" width="72" height="58" fill="#2e2c2a"/><circle cx="710" cy="190" r="20" fill="#8fb560"/>
<rect x="325" y="172" width="110" height="33" fill="#e9dfd2"/>
</svg></div>

</body>
</html>
